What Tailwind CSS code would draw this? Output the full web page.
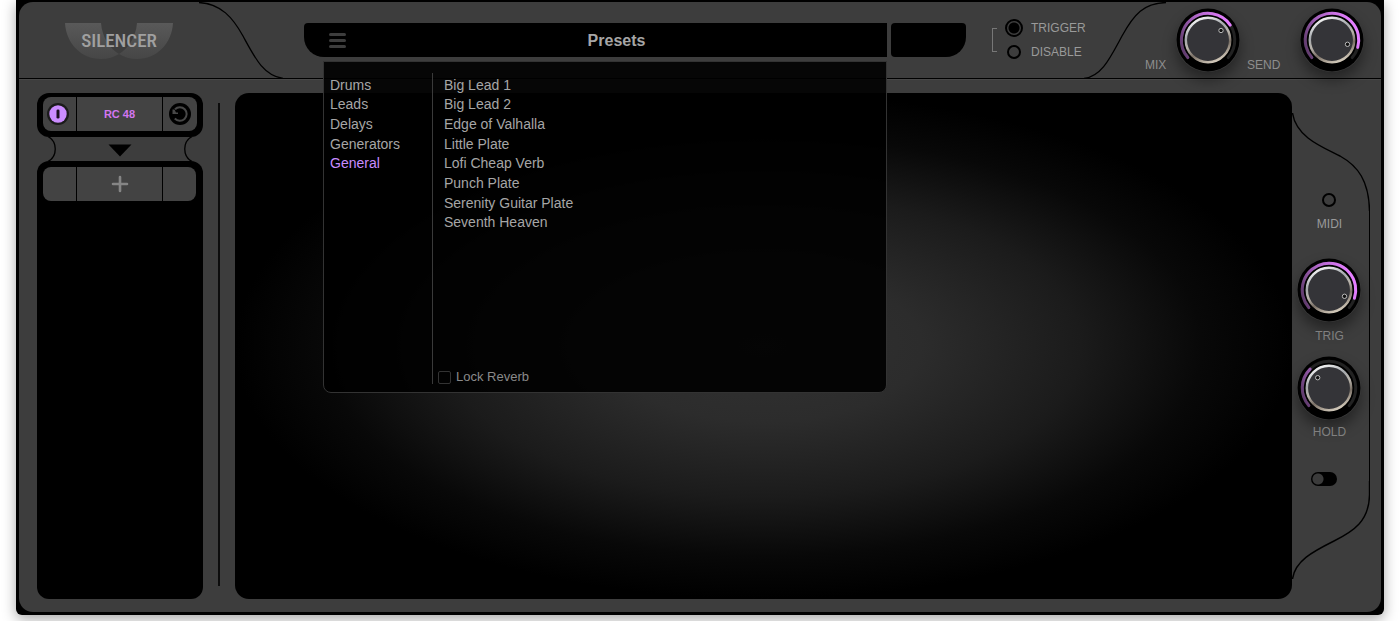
<!DOCTYPE html>
<html lang="en">

<head>
    <meta charset="UTF-8">
    <meta name="viewport" content="width=device-width, initial-scale=1.0">
    <title>Silencer</title>

    <script src="https://cdn.jsdelivr.net/npm/@tailwindcss/browser@4"></script>
</head>

<body class="bg-white h-screen px-4 pb-1.5 font-['Liberation_Sans',Arial,sans-serif] text-xs text-[#a0a0a0] antialiased">
    <!-- Shared knob artwork -->
    <svg class="absolute w-0 h-0" aria-hidden="true">
        <defs>
            <linearGradient id="arc" gradientUnits="userSpaceOnUse" x1="5" y1="44" x2="56" y2="24">
                <stop offset="0" stop-color="#5a3866" />
                <stop offset=".45" stop-color="#a862c0" />
                <stop offset="1" stop-color="#e47dff" />
            </linearGradient>
            <linearGradient id="rim" x1=".3" y1="0" x2=".7" y2="1">
                <stop offset="0" stop-color="#f4f4f4" />
                <stop offset=".3" stop-color="#a5a9ad" />
                <stop offset=".5" stop-color="#b9b4ac" />
                <stop offset=".7" stop-color="#7a7066" />
                <stop offset="1" stop-color="#d8cfc0" />
            </linearGradient>
            <linearGradient id="wing" x1="0" y1="0" x2="0" y2="1">
                <stop offset="0" stop-color="#595959" />
                <stop offset="1" stop-color="#464646" />
            </linearGradient>
            <symbol id="knob" viewBox="0 0 64 64">
                <circle cx="32" cy="32" r="31.5" fill="#000" />
                <path d="M11.8 49.55A26.75 26.75 0 1 1 52.2 49.55" fill="none" stroke="#222" stroke-width="3" stroke-linecap="round" />
                <circle cx="32" cy="32" r="22.2" fill="#343438" stroke="url(#rim)" stroke-width="2.5" />
            </symbol>
        </defs>
    </svg>

    <main class="h-full flex flex-col bg-black rounded-b-md px-[3px] pt-0.5 pb-[3px] shadow-[0_4px_14px_rgba(0,0,0,0.35)]">
        <div class="flex-1 flex flex-col bg-[#3d3d3d] rounded-[14px]">

            <!-- Top bar -->
            <header class="flex h-[77px] border-b border-black shadow-[0_1px_0_#484848]">
                <div class="relative w-[285px] pl-[46px] pt-[21px]">
                    <svg class="absolute top-0 left-[178px] w-[88px] h-[77px]" viewBox="0 0 88 77" fill="none" stroke="#000" stroke-width="1.3">
                        <path d="M2 .5C24 1.5 36 16 46 34C58 56 66 73 86 76.5" />
                    </svg>
                    <div class="relative w-[108px] h-9">
                        <svg class="absolute inset-0" viewBox="0 0 108 36" fill="url(#wing)">
                            <path d="M0 0H36C37 14 45 26 54 31C49 34 43 36 36 36C16 36 1 20 0 0Z" />
                            <path d="M108 0H72C71 14 63 26 54 31C59 34 65 36 72 36C92 36 107 20 108 0Z" />
                        </svg>
                        <h1 class="relative h-9 flex items-center justify-center text-[19px] font-medium text-[#a0a0a0] font-['Roboto_Condensed',Roboto,sans-serif]">SILENCER</h1>
                    </div>
                </div>

                <div class="relative flex-1 h-[34px] mt-[21px] flex items-center justify-center bg-black rounded-sm rounded-bl-[20px] rounded-br-none rounded-tr-none">
                    <button type="button" aria-label="Menu" class="absolute left-[25px] top-[10px] w-[17px] h-[15px] flex flex-col justify-between">
                        <span class="h-[3px] rounded-full bg-[#3d3d3d]"></span>
                        <span class="h-[3px] rounded-full bg-[#3d3d3d]"></span>
                        <span class="h-[3px] rounded-full bg-[#3d3d3d]"></span>
                    </button>
                    <h2 class="pl-[42px] pt-0.5 text-base font-bold text-[#a6a6a6]">Presets</h2>

                    <!-- Preset menu -->
                    <div class="absolute z-10 top-[38px] left-[19px] right-0 h-[332px] flex bg-black/90 border border-[#333] rounded-b-lg pt-[11px] pb-2 text-sm leading-4 text-[#a6a6a6]">
                        <nav class="w-[108px] pl-1.5 pt-0.5">
                            <div class="h-[98px] flex flex-col">
                                <a href="#" class="flex-1 flex items-center">Drums</a>
                                <a href="#" class="flex-1 flex items-center">Leads</a>
                                <a href="#" class="flex-1 flex items-center">Delays</a>
                                <a href="#" class="flex-1 flex items-center">Generators</a>
                                <a href="#" class="flex-1 flex items-center text-[#c88cff]">General</a>
                            </div>
                        </nav>
                        <div class="flex-1 flex flex-col justify-between pt-0.5 border-l border-[#3a3a3a]">
                            <div class="h-[157px] pl-[11px] flex flex-col">
                                <a href="#" class="flex-1 flex items-center">Big Lead 1</a>
                                <a href="#" class="flex-1 flex items-center">Big Lead 2</a>
                                <a href="#" class="flex-1 flex items-center">Edge of Valhalla</a>
                                <a href="#" class="flex-1 flex items-center">Little Plate</a>
                                <a href="#" class="flex-1 flex items-center">Lofi Cheap Verb</a>
                                <a href="#" class="flex-1 flex items-center">Punch Plate</a>
                                <a href="#" class="flex-1 flex items-center">Serenity Guitar Plate</a>
                                <a href="#" class="flex-1 flex items-center">Seventh Heaven</a>
                            </div>
                            <label class="flex items-center gap-[5px] pl-[5px] text-[13px] leading-[14px] text-[#8a8a8a]">
                                <input type="checkbox" class="appearance-none w-[13px] h-[13px] border border-[#333] rounded-xs checked:bg-[#c88cff]">
                                Lock Reverb
                            </label>
                        </div>
                    </div>
                </div>
                <div class="w-[75px] h-[34px] mt-[21px] ml-1 bg-black rounded-sm rounded-br-[20px]"></div>

                <fieldset class="flex w-[118px] ml-[26px] pt-4">
                    <span class="w-[5px] h-6 mt-[10px] border border-r-0 border-[#777]"></span>
                    <div class="flex flex-col ml-2 text-[#9a9a9a]">
                        <label class="flex items-center gap-2 h-5">
                            <input type="radio" name="mode" checked class="appearance-none w-[18px] h-[18px] rounded-full border-2 border-black bg-[radial-gradient(circle,#000_5px,#3d3d3d_6px)]">
                            TRIGGER
                        </label>
                        <label class="flex items-center gap-[10px] h-[27px] pl-0.5">
                            <input type="radio" name="mode" class="appearance-none w-[14px] h-[14px] rounded-full border-2 border-black">
                            DISABLE
                        </label>
                    </div>
                </fieldset>

                <div class="relative flex w-[271px] pl-[35px] pt-1.5">
                    <svg class="absolute top-0 -left-[26px] w-[82px] h-[77px]" viewBox="0 0 82 77" fill="none" stroke="#000" stroke-width="1.3">
                        <path d="M82 .5C60 1 50 12 38 34C26 56 18 74 0 76.5" />
                    </svg>
                    <label for="mix" class="w-[31px] pt-[49px] text-[#8e8e8e]">MIX</label>
                    <div class="relative w-16 h-16 rounded-full shadow-[0_8px_14px_rgba(0,0,0,0.4)]">
                        <svg class="w-16 h-16" viewBox="0 0 64 64" fill="none">
                            <use href="#knob" width="64" height="64" />
                            <path d="M11.8 49.55A26.75 26.75 0 1 1 54.2 17.05" stroke="url(#arc)" stroke-width="3" stroke-linecap="round" />
                            <circle cx="45" cy="22.5" r="2.2" fill="#111" stroke="#bbb" />
                        </svg>
                        <input type="range" id="mix" value="71" class="absolute inset-0 w-full h-full opacity-0">
                    </div>
                    <label for="send" class="w-[60px] pl-[7px] pt-[49px] text-[#8e8e8e]">SEND</label>
                    <div class="relative w-16 h-16 rounded-full shadow-[0_8px_14px_rgba(0,0,0,0.4)]">
                        <svg class="w-16 h-16" viewBox="0 0 64 64" fill="none">
                            <use href="#knob" width="64" height="64" />
                            <path d="M11.8 49.55A26.75 26.75 0 1 1 57.7 39.4" stroke="url(#arc)" stroke-width="3" stroke-linecap="round" />
                            <circle cx="47.5" cy="36.3" r="2.2" fill="#111" stroke="#bbb" />
                        </svg>
                        <input type="range" id="send" value="90" class="absolute inset-0 w-full h-full opacity-0">
                    </div>
                </div>
            </header>

            <div class="flex-1 flex pt-[14px] pb-[13px] pl-[18px]">
                <!-- Effect chain -->
                <aside class="w-[166px] flex flex-col">
                    <div class="h-11 bg-black rounded-xl pt-1 px-1.5">
                        <div class="h-[34px] flex bg-[#434343] rounded-lg">
                            <button type="button" aria-label="Power" class="w-[34px] pr-1 flex items-center justify-center border-r border-black">
                                <svg class="w-6 h-6" viewBox="0 0 24 24">
                                    <circle cx="12" cy="12" r="11" fill="#1b1b1b" />
                                    <circle cx="12" cy="12" r="8.7" fill="#cb8dff" />
                                    <rect x="10.5" y="7.5" width="3" height="9" rx="1.3" fill="#1b1020" />
                                </svg>
                            </button>
                            <button type="button" class="flex-1 text-[11px] font-bold text-[#d276f0]">RC 48</button>
                            <button type="button" aria-label="Reset" class="w-[35px] flex items-center justify-center border-l border-black">
                                <svg class="w-6 h-6" viewBox="0 0 24 24" fill="none">
                                    <circle cx="12" cy="12" r="11" fill="#000" />
                                    <path d="M7 7.2A6.8 6.8 0 1 1 6.8 16.5" stroke="#484848" stroke-width="2" />
                                    <path d="M4.5 7.5V12H10V10.500H8L6.500 7.5Z" fill="#484848" />
                                </svg>
                            </button>
                        </div>
                    </div>
                    <svg class="w-[166px] h-6" viewBox="0 0 166 24" fill="none">
                        <path d="M10 -1C21 4 21 20 10 25M156 -1C145 4 145 20 156 25" stroke="#000" stroke-width="1.3" />
                        <path d="M71.5 7.5H94.5L83 19.5Z" fill="#000" />
                    </svg>
                    <div class="flex-1 bg-black rounded-xl pt-1.5 pl-1.5 pr-[7px]">
                        <div class="h-[34px] flex bg-[#434343] rounded-lg">
                            <span class="w-[34px] border-r border-black"></span>
                            <button type="button" aria-label="Add effect" class="flex-1 flex items-center justify-center">
                                <svg class="w-[18px] h-[18px]" viewBox="0 0 18 18" stroke="#858585" stroke-width="2.6" stroke-linecap="round">
                                    <path d="M9 2V16M2 9H16" />
                                </svg>
                            </button>
                            <span class="w-[34px] border-l border-black"></span>
                        </div>
                    </div>
                </aside>

                <div class="w-0.5 mx-[15px] mt-[10px] mb-[13px] bg-[#0c0c0c]"></div>

                <!-- Display -->
                <section class="flex-1 bg-black bg-[radial-gradient(ellipse_50%_50%_at_50%_50%,#323232,#2c2c2c_30%,#1b1b1b_60%,#080808_83%,#000)] rounded-[14px]"></section>

                <!-- Trigger controls -->
                <aside class="relative w-[89px] pr-[14px] flex flex-col items-center text-[#808080]">
                    <div class="absolute top-5 bottom-5 left-0 w-[78px] flex flex-col">
                        <svg class="w-[78px] h-[98px]" viewBox="0 0 78 98" fill="none" stroke="#000" stroke-width="1.4">
                            <path d="M.5 0C4 24 30 34 48 43C66 53 77 68 77.5 98" />
                        </svg>
                        <div class="flex-1 border-r border-black"></div>
                        <svg class="w-[78px] h-[98px]" viewBox="0 0 78 98" fill="none" stroke="#000" stroke-width="1.4">
                            <path d="M77.5 0V14C77 40 62 50 42 60C20 71 3 80 .5 98" />
                        </svg>
                    </div>
                    <label class="relative flex flex-col items-center gap-[9px] pt-[100px] text-[#9a9a9a]">
                        <input type="radio" name="midi" class="appearance-none w-[14px] h-[14px] mr-0.5 rounded-full border-2 border-black">
                        MIDI
                    </label>
                    <div class="relative w-16 h-16 mt-[26px] mr-0.5 rounded-full shadow-[0_8px_14px_rgba(0,0,0,0.4)]">
                        <svg class="w-16 h-16" viewBox="0 0 64 64" fill="none">
                            <use href="#knob" width="64" height="64" />
                            <path d="M11.8 49.55A26.75 26.75 0 1 1 57.4 40.3" stroke="url(#arc)" stroke-width="3" stroke-linecap="round" />
                            <circle cx="47.5" cy="38.3" r="2.2" fill="#111" stroke="#bbb" />
                        </svg>
                        <input type="range" id="trig" value="91" class="absolute inset-0 w-full h-full opacity-0">
                    </div>
                    <label for="trig" class="relative mt-1.5">TRIG</label>
                    <div class="relative w-16 h-16 mt-3 mr-0.5 rounded-full shadow-[0_8px_14px_rgba(0,0,0,0.4)]">
                        <svg class="w-16 h-16" viewBox="0 0 64 64" fill="none">
                            <use href="#knob" width="64" height="64" />
                            <path d="M11.8 49.55A26.75 26.75 0 0 1 13.1 13.1" stroke="url(#arc)" stroke-width="3" stroke-linecap="round" />
                            <circle cx="20.7" cy="21.7" r="2.2" fill="#111" stroke="#bbb" />
                        </svg>
                        <input type="range" id="hold" value="33" class="absolute inset-0 w-full h-full opacity-0">
                    </div>
                    <label for="hold" class="relative mt-1">HOLD</label>
                    <input type="checkbox" role="switch" aria-label="Hold" class="relative appearance-none w-[26px] h-[14px] mt-8 mr-3 rounded-full bg-black bg-[radial-gradient(circle_at_7px_7px,#3b3b3b_5px,transparent_6px)]">
                </aside>
            </div>
        </div>
    </main>
</body>

</html>
